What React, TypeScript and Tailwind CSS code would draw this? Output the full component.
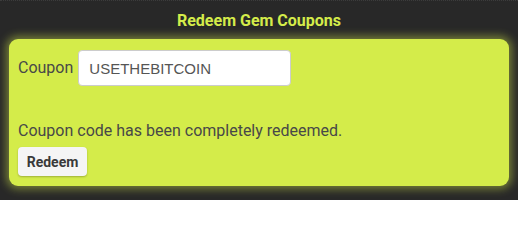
import React from "react";

export default function App() {
  return (
    <div className="w-[518px] h-[200px] bg-[#282828] font-['Roboto',sans-serif] border-t border-dotted border-[#3c3c3c] overflow-hidden">
      <div className="h-[37px] flex items-center justify-center">
        <span className="text-[16px] font-bold text-[#d4ec4a] leading-5 mt-[3px]">Redeem Gem Coupons</span>
      </div>
      <div className="mx-[9px] mt-[1px] h-[147px] rounded-[9px] bg-[#d4ec4a] shadow-[0_0_9px_3px_rgba(212,236,74,0.45)] pt-[11px] px-[9px] flex flex-col items-start">
        <div className="flex items-center gap-[5px] h-[36px]">
          <span className="text-[16px] text-[#484848] leading-5">Coupon</span>
          <input
            readOnly
            value="USETHEBITCOIN"
            className="w-[213px] h-[36px] bg-white rounded-[4px] border border-[#cccccc] px-[10px] text-[15px] text-[#555] outline-none font-['Liberation_Sans',Arial,sans-serif]"
          />
        </div>
        <p className="mt-[35px] text-[16px] leading-5 text-[#484848]">Coupon code has been completely redeemed.</p>
        <button className="mt-[6px] w-[69px] h-[29px] rounded-[4px] bg-[#f5f5f5] shadow-[0_1px_2px_rgba(0,0,0,0.25)] text-[14px] font-bold text-[#3a3a3a] leading-5 font-['Roboto',sans-serif]">
          Redeem
        </button>
      </div>
    </div>
  );
}
